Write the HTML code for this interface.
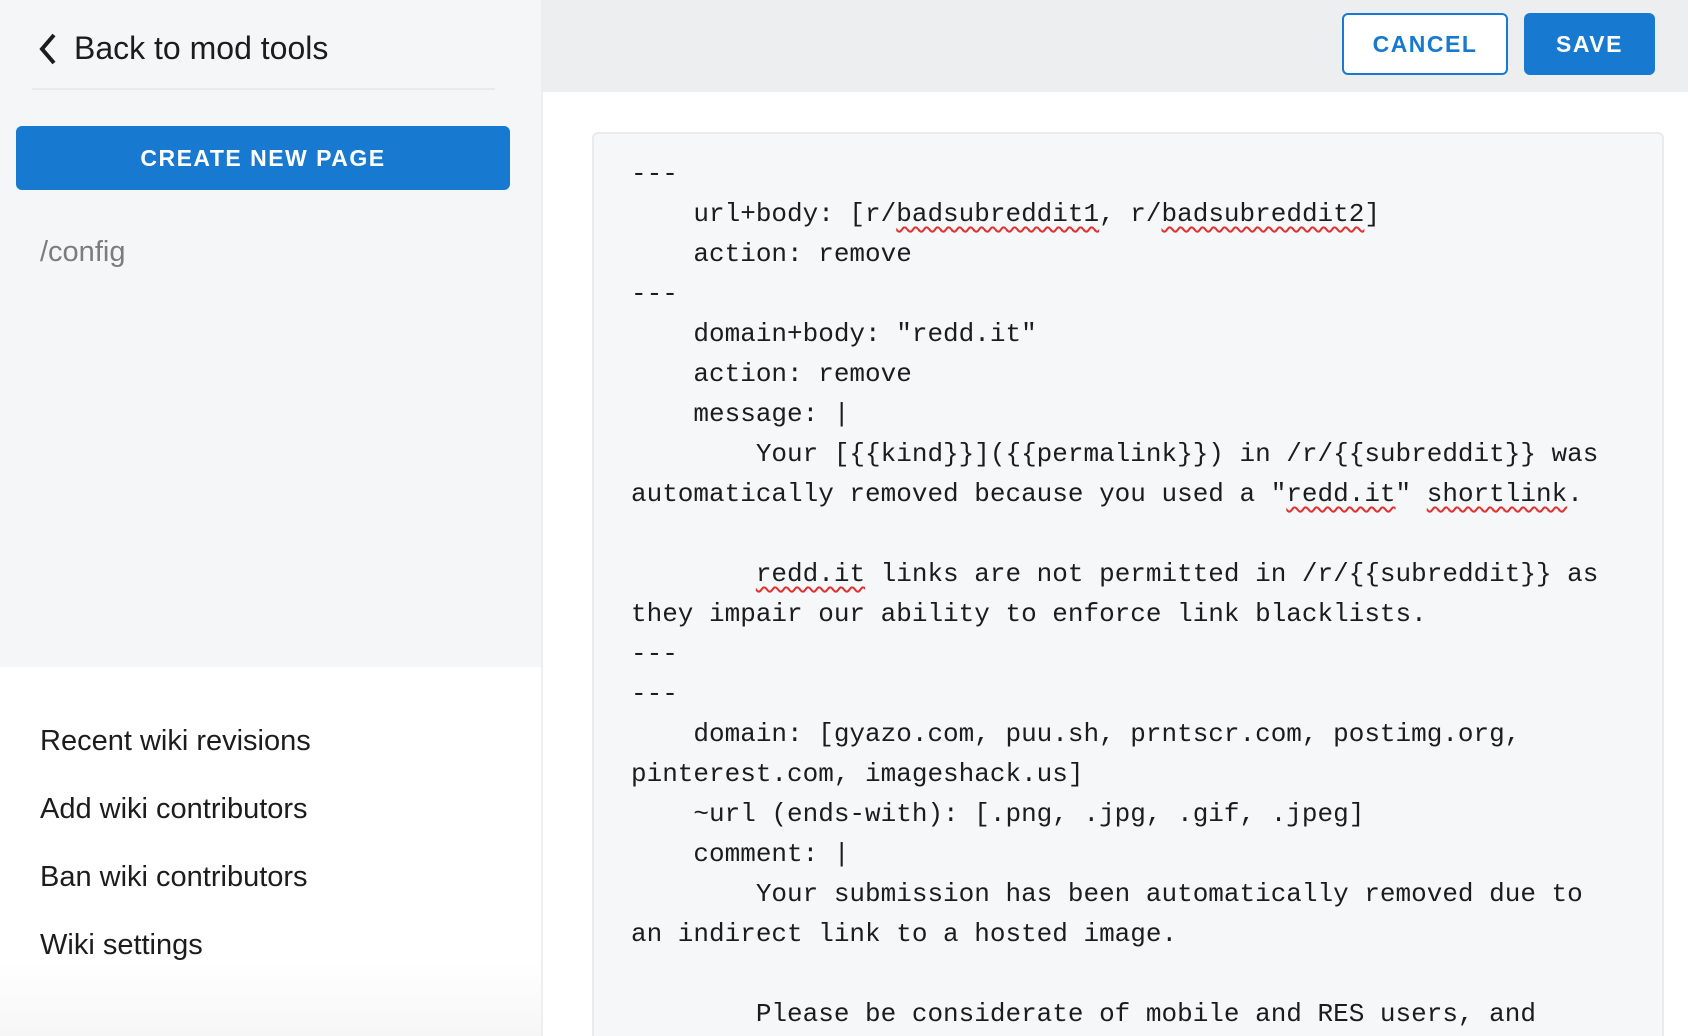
<!DOCTYPE html>
<html><head><meta charset="utf-8"><style>
*{margin:0;padding:0;box-sizing:border-box}
html{width:1688px;height:1036px;overflow:hidden}
body{width:1688px;height:1036px;overflow:hidden;background:#fff;font-family:"Liberation Sans","DejaVu Sans",sans-serif;position:relative}
.side{position:absolute;left:0;top:0;width:543px;height:1036px;background:#f5f6f8;border-right:2px solid #eceef0}
.sideb{position:absolute;left:0;top:667px;width:541px;height:369px;background:linear-gradient(#fff 80%,#f6f6f6)}
.back{position:absolute;left:36px;top:30px;font-size:32px;color:#1c1c1c;display:flex;align-items:center}
.hr{position:absolute;left:32px;top:88px;width:463px;height:2px;background:#e8eaec}
.create{position:absolute;left:16px;top:126px;width:494px;height:64px;background:#1779d0;border-radius:6px;color:#fff;font-weight:bold;font-size:23px;letter-spacing:1.5px;text-align:center;line-height:64px}
.cfg{position:absolute;left:40px;top:236px;font-size:29px;color:#7c7c7c}
.link{position:absolute;left:40px;font-size:29px;color:#1c1c1c}
.top{position:absolute;left:543px;top:0;width:1145px;height:92px;background:#edeef0}
.btn{position:absolute;top:13px;height:62px;border-radius:6px;font-weight:bold;font-size:23px;letter-spacing:1.5px;text-align:center;line-height:58px}
.cancel{left:1342px;width:166px;border:2px solid #1779d0;color:#1779d0;background:#fff}
.save{left:1524px;width:131px;background:#1779d0;color:#fff;border:2px solid #1779d0}
.ed{position:absolute;left:592px;top:132px;width:1072px;height:904px;overflow:hidden;background:#f6f7f8;border:2px solid #ebebeb;border-bottom:none;border-radius:6px 6px 0 0;padding:20px 0 0 37px}
pre{font-family:"Liberation Mono","DejaVu Sans Mono",monospace;font-size:26px;line-height:40px;color:#1c1c1c}
.w{text-decoration:underline wavy #e03030;text-decoration-thickness:1.5px;text-underline-offset:5px}
</style></head><body>
<div class="side"></div>
<div class="sideb"></div>
<div class="back"><svg width="26" height="36" viewBox="0 0 26 36" style="margin-right:12px"><path d="M18 4 L6 18 L18 32" fill="none" stroke="#1c1c1c" stroke-width="4"/></svg>Back to mod tools</div>
<div class="hr"></div>
<div class="create">CREATE NEW PAGE</div>
<div class="cfg">/config</div>
<div class="link" style="top:725px">Recent wiki revisions</div>
<div class="link" style="top:793px">Add wiki contributors</div>
<div class="link" style="top:861px">Ban wiki contributors</div>
<div class="link" style="top:929px">Wiki settings</div>
<div class="top"></div>
<div class="btn cancel">CANCEL</div>
<div class="btn save">SAVE</div>
<div class="ed"><pre>---
    url+body: [r/<span class="w">badsubreddit1</span>, r/<span class="w">badsubreddit2</span>]
    action: remove
---
    domain+body: "redd.it"
    action: remove
    message: |
        Your [{{kind}}]({{permalink}}) in /r/{{subreddit}} was
automatically removed because you used a "<span class="w">redd.it</span>" <span class="w">shortlink</span>.

        <span class="w">redd.it</span> links are not permitted in /r/{{subreddit}} as
they impair our ability to enforce link blacklists.
---
---
    domain: [gyazo.com, puu.sh, prntscr.com, postimg.org,
pinterest.com, imageshack.us]
    ~url (ends-with): [.png, .jpg, .gif, .jpeg]
    comment: |
        Your submission has been automatically removed due to
an indirect link to a hosted image.

        Please be considerate of mobile and RES users, and
</pre></div>
</body></html>
